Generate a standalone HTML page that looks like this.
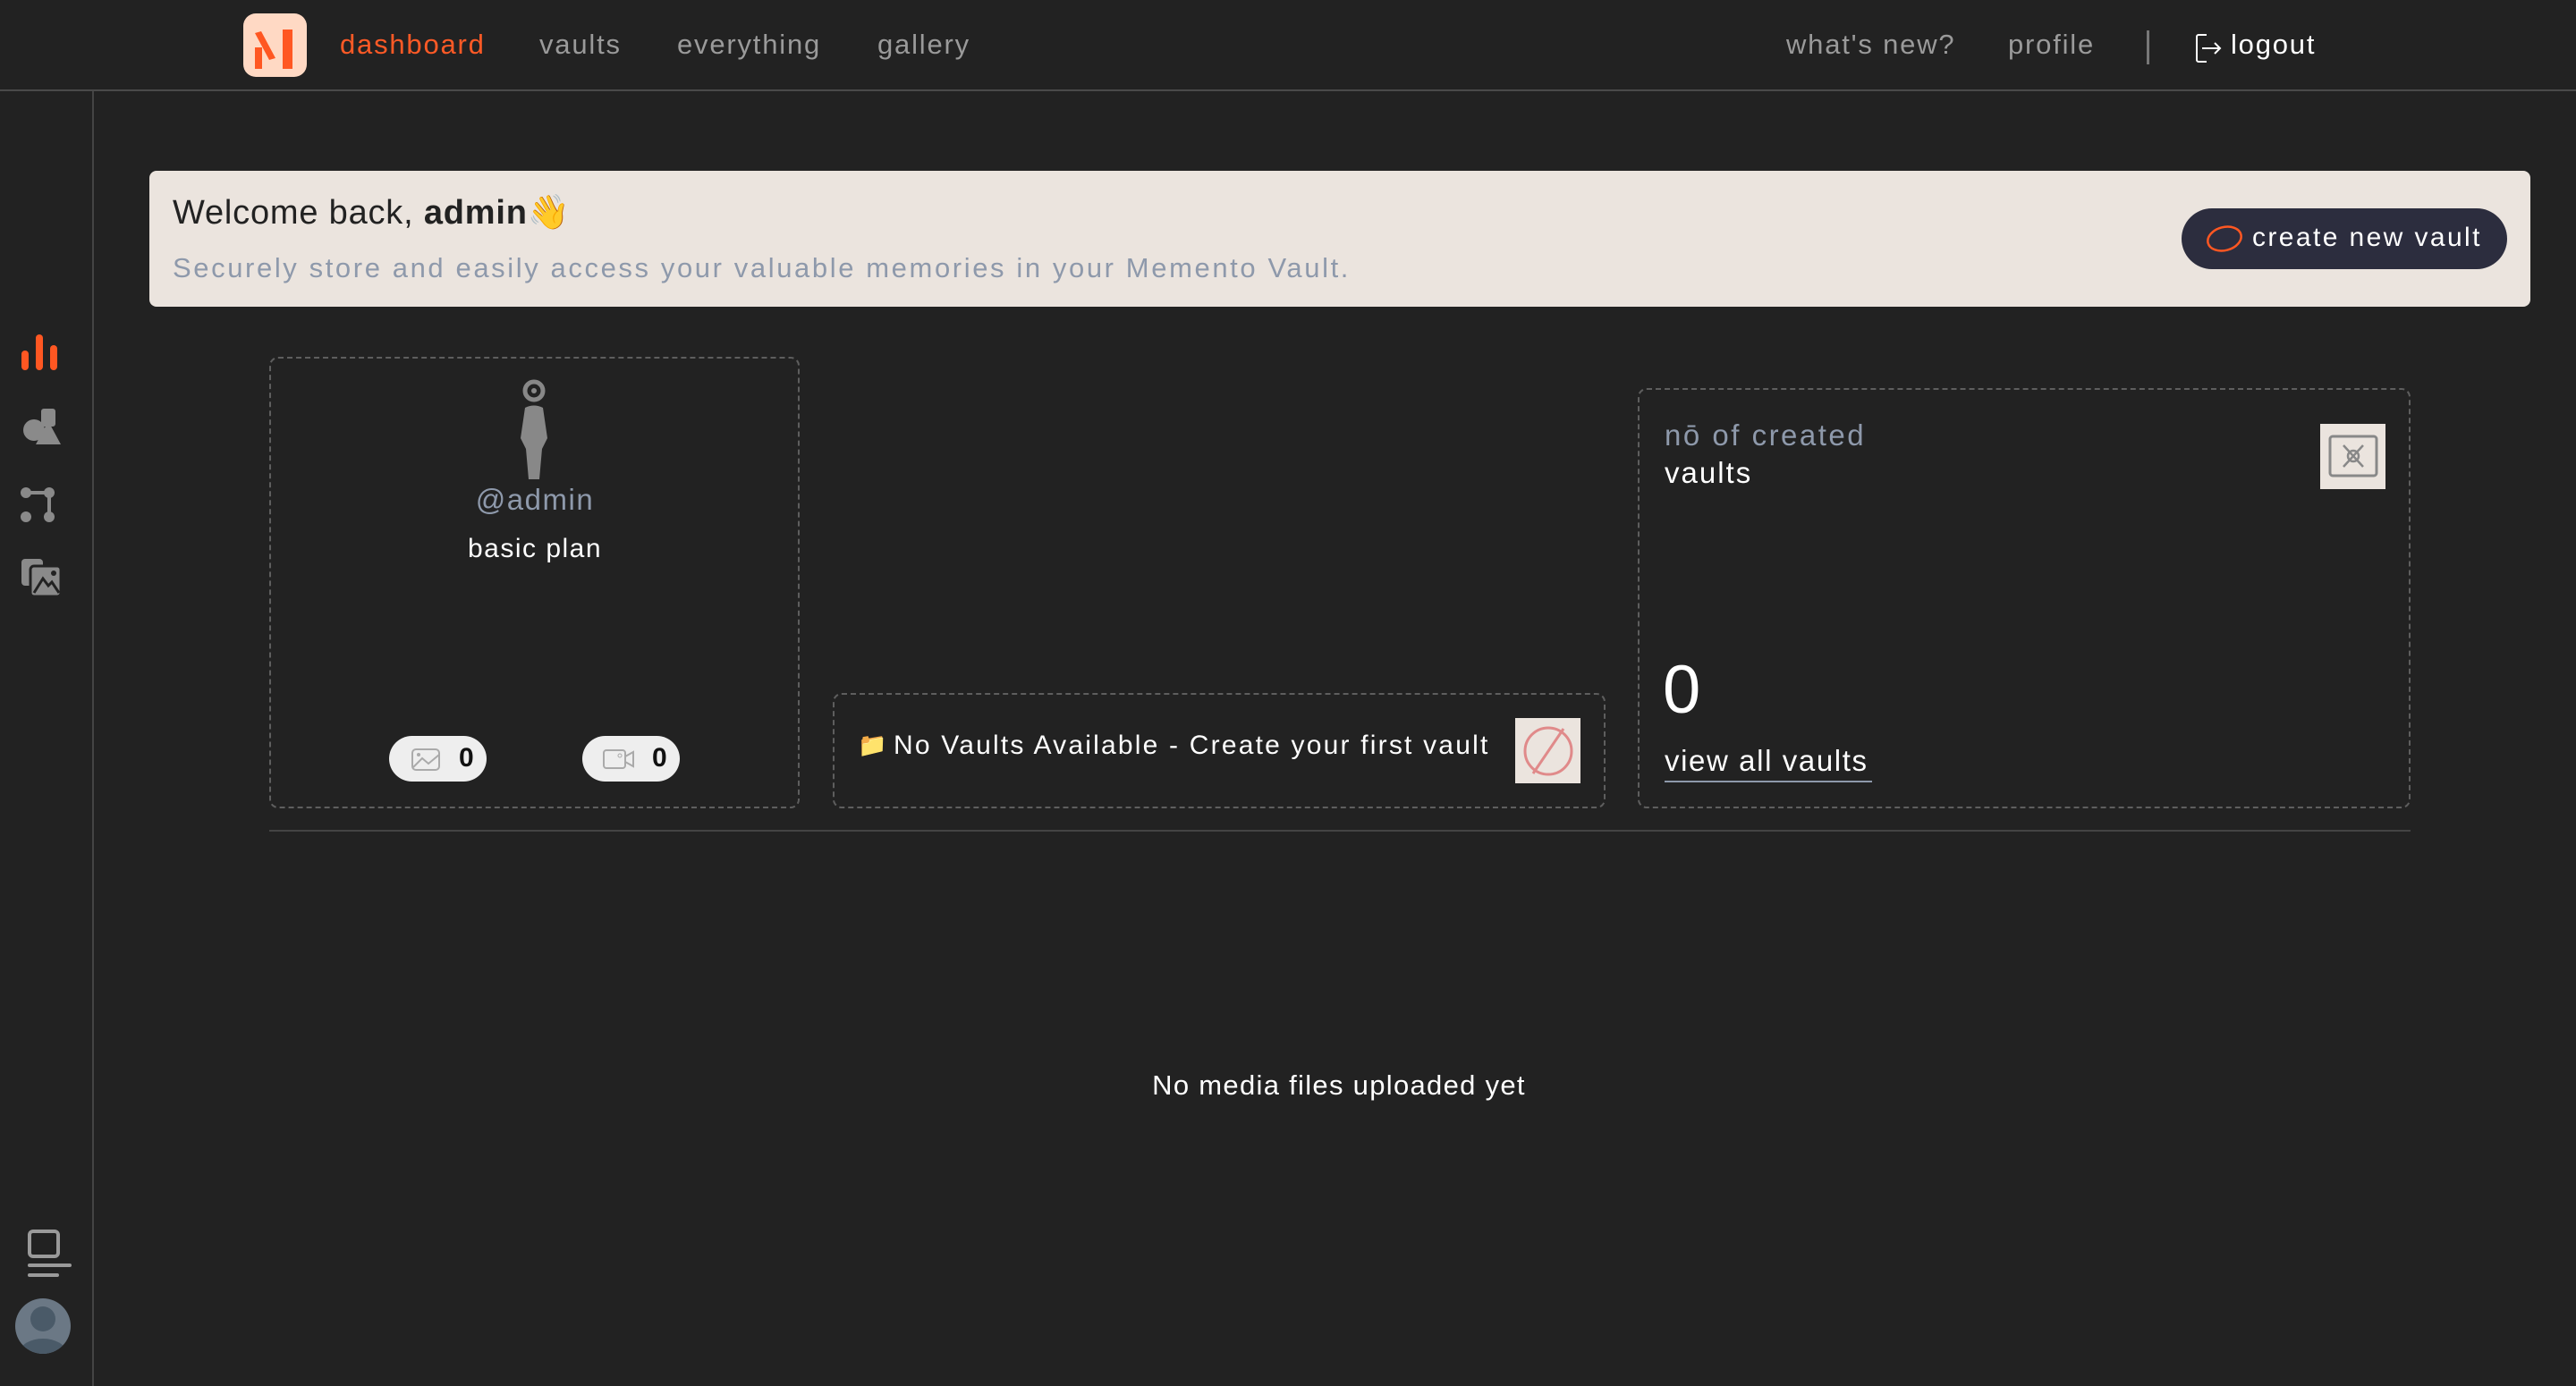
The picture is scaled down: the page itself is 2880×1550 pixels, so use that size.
<!DOCTYPE html>
<html><head><meta charset="utf-8"><style>
*{margin:0;padding:0;box-sizing:border-box}
body{width:2880px;height:1550px;background:#222;font-family:"Liberation Sans",sans-serif;position:relative;overflow:hidden;color:#fff}
.a{position:absolute;white-space:nowrap}
.nav{font-size:31px;color:#9a9a9a;letter-spacing:1.8px;top:32px}
.card{position:absolute;border:2px dashed #5e5e5e;border-radius:10px}
.pill{position:absolute;background:#eee;border-radius:26px;height:51px;width:109px}
</style></head><body>
<!-- header -->
<div class="a" style="left:0;top:100px;width:2880px;height:2px;background:#4a4a4a"></div>
<div class="a" style="left:272px;top:15px;width:71px;height:71px;background:#ffd9c4;border-radius:14px">
<svg width="71" height="71" viewBox="0 0 71 71"><path d="M13 22 L20 20 L36 50 L29 52 Z" fill="#ff5722"/><rect x="13" y="38" width="8" height="24" fill="#ff5722"/><rect x="44" y="18" width="11" height="44" fill="#ff5722"/></svg></div>
<div class="a nav" style="left:380px;color:#ff5a26">dashboard</div>
<div class="a nav" style="left:603px">vaults</div>
<div class="a nav" style="left:757px">everything</div>
<div class="a nav" style="left:981px">gallery</div>
<div class="a nav" style="left:1997px">what's new?</div>
<div class="a nav" style="left:2245px">profile</div>
<div class="a" style="left:2400px;top:34px;width:3px;height:38px;background:#777"></div>
<svg class="a" style="left:2454px;top:37px" width="32" height="34" viewBox="0 0 32 34"><path d="M13 2 H4 a2 2 0 0 0 -2 2 V30 a2 2 0 0 0 2 2 H13" fill="none" stroke="#fff" stroke-width="2"/><path d="M8 17 H28 M22 11 L28 17 L22 23" fill="none" stroke="#fff" stroke-width="2"/></svg>
<div class="a nav" style="left:2494px;color:#fff">logout</div>
<!-- sidebar -->
<div class="a" style="left:103px;top:102px;width:2px;height:1448px;background:#444"></div>
<svg class="a" style="left:22px;top:372px" width="48" height="44"><g stroke="#ff5722" stroke-width="8" stroke-linecap="round"><line x1="6" y1="24" x2="6" y2="38"/><line x1="22" y1="6" x2="22" y2="38"/><line x1="38" y1="18" x2="38" y2="38"/></g></svg>
<svg class="a" style="left:24px;top:455px" width="46" height="44"><circle cx="14" cy="26" r="12" fill="#8a8a8a"/><rect x="22" y="2" width="16" height="20" rx="3" fill="#8a8a8a"/><path d="M30 16 L44 42 H16 Z" fill="#8a8a8a"/></svg>
<svg class="a" style="left:22px;top:544px" width="42" height="42"><circle cx="7" cy="7" r="6" fill="#8a8a8a"/><circle cx="33" cy="7" r="6" fill="#8a8a8a"/><circle cx="7" cy="34" r="6" fill="#8a8a8a"/><circle cx="33" cy="34" r="6" fill="#8a8a8a"/><path d="M7 7 H33 V34" stroke="#8a8a8a" stroke-width="4" fill="none"/></svg>
<svg class="a" style="left:22px;top:623px" width="50" height="46"><rect x="2" y="2" width="24" height="30" rx="4" fill="#8a8a8a"/><rect x="12" y="10" width="34" height="34" rx="4" fill="#8a8a8a" stroke="#222" stroke-width="3"/><path d="M16 40 L26 24 L32 32 L36 28 L44 40" stroke="#222" stroke-width="3" fill="none"/><circle cx="38" cy="18" r="3" fill="#222"/></svg>
<svg class="a" style="left:30px;top:1375px" width="52" height="56"><rect x="3" y="2" width="32" height="28" rx="4" fill="none" stroke="#9a9a9a" stroke-width="4"/><line x1="3" y1="40" x2="48" y2="40" stroke="#9a9a9a" stroke-width="4" stroke-linecap="round"/><line x1="3" y1="51" x2="34" y2="51" stroke="#9a9a9a" stroke-width="4" stroke-linecap="round"/></svg>
<svg class="a" style="left:16px;top:1451px" width="64" height="64"><defs><clipPath id="c"><circle cx="32" cy="32" r="31"/></clipPath></defs><circle cx="32" cy="32" r="31" fill="#6b7885"/><g clip-path="url(#c)" fill="#4a5a68"><circle cx="32" cy="24" r="14"/><ellipse cx="32" cy="62" rx="26" ry="16"/></g></svg>
<!-- banner -->
<div class="a" style="left:167px;top:191px;width:2662px;height:152px;background:#ebe4de;border-radius:8px"></div>
<div class="a" style="left:193px;top:216px;font-size:38px;color:#222;letter-spacing:0.8px">Welcome back, <b>admin</b>👋</div>
<div class="a" style="left:193px;top:282px;font-size:31px;color:#8e99ab;letter-spacing:2.6px">Securely store and easily access your valuable memories in your Memento Vault.</div>
<div class="a" style="left:2439px;top:233px;width:364px;height:68px;background:#2c2d3e;border-radius:34px"></div>
<svg class="a" style="left:2466px;top:250px" width="42" height="34"><ellipse cx="21" cy="17" rx="19" ry="13" fill="none" stroke="#ff5722" stroke-width="2.5" transform="rotate(-15 21 17)"/></svg>
<div class="a" style="left:2518px;top:249px;font-size:30px;color:#fff;letter-spacing:2.4px">create new vault</div>
<!-- card 1 -->
<div class="card" style="left:301px;top:399px;width:593px;height:505px"></div>
<svg class="a" style="left:576px;top:424px" width="42" height="114"><circle cx="21" cy="13" r="10" fill="none" stroke="#888" stroke-width="5"/><circle cx="21" cy="13" r="3" fill="#888"/><path d="M11 32 Q21 27 31 32 L36 66 L30 78 L27 112 H15 L12 78 L6 66 Z" fill="#888"/></svg>
<div class="a" style="left:0;width:1196px;top:540px;text-align:center;font-size:33px;color:#8e99ab;letter-spacing:1.5px">@admin</div>
<div class="a" style="left:0;width:1196px;top:597px;text-align:center;font-size:30px;color:#fff;letter-spacing:1.5px">basic plan</div>
<div class="pill" style="left:435px;top:823px"><svg class="a" style="left:24px;top:13px" width="34" height="26"><rect x="2" y="2" width="30" height="23" rx="4" fill="none" stroke="#aaa" stroke-width="2"/><path d="M3 22 L13 12 L20 18 L32 8" fill="none" stroke="#aaa" stroke-width="2"/><circle cx="9" cy="8" r="2" fill="#aaa"/></svg><div class="a" style="left:78px;top:8px;font-size:30px;color:#111;font-weight:bold">0</div></div>
<div class="pill" style="left:651px;top:823px"><svg class="a" style="left:22px;top:14px" width="38" height="24"><rect x="2" y="2" width="24" height="20" rx="3" fill="none" stroke="#aaa" stroke-width="2"/><path d="M26 9 L35 4 V20 L26 15" fill="none" stroke="#aaa" stroke-width="2"/><circle cx="20" cy="8" r="2" fill="none" stroke="#aaa"/></svg><div class="a" style="left:78px;top:8px;font-size:30px;color:#111;font-weight:bold">0</div></div>
<!-- card 2 -->
<div class="card" style="left:931px;top:775px;width:864px;height:129px"></div>
<div class="a" style="left:959px;top:818px;font-size:26px">📁</div>
<div class="a" style="left:999px;top:817px;font-size:30px;color:#fff;letter-spacing:2.2px">No Vaults Available - Create your first vault</div>
<div class="a" style="left:1694px;top:803px;width:73px;height:73px;background:#ebe4de"><svg width="73" height="73"><circle cx="37" cy="37" r="26" fill="none" stroke="#e08a8a" stroke-width="3"/><line x1="20" y1="62" x2="54" y2="12" stroke="#e08a8a" stroke-width="3"/></svg></div>
<!-- card 3 -->
<div class="card" style="left:1831px;top:434px;width:864px;height:470px"></div>
<div class="a" style="left:1861px;top:468px;font-size:33px;color:#8e99ab;letter-spacing:2.5px">nō of created</div>
<div class="a" style="left:1861px;top:510px;font-size:33px;color:#fff;letter-spacing:2px">vaults</div>
<div class="a" style="left:2594px;top:474px;width:73px;height:73px;background:#ebe4de"><svg width="73" height="73"><rect x="11" y="14" width="52" height="44" rx="3" fill="none" stroke="#888" stroke-width="3"/><circle cx="37" cy="36" r="6" fill="none" stroke="#888" stroke-width="2.5"/><path d="M26 24 L48 48 M48 24 L26 48" stroke="#888" stroke-width="2.5"/></svg></div>
<div class="a" style="left:1859px;top:728px;font-size:76px;color:#fff">0</div>
<div class="a" style="left:1861px;top:832px;font-size:33px;color:#fff;letter-spacing:1.6px">view all vaults</div>
<div class="a" style="left:1861px;top:873px;width:232px;height:2px;background:#8e99ab"></div>
<!-- divider -->
<div class="a" style="left:301px;top:928px;width:2394px;height:2px;background:#444"></div>
<div class="a" style="left:0;width:2994px;top:1196px;text-align:center;font-size:31px;color:#fff;letter-spacing:1.3px">No media files uploaded yet</div>
</body></html>
